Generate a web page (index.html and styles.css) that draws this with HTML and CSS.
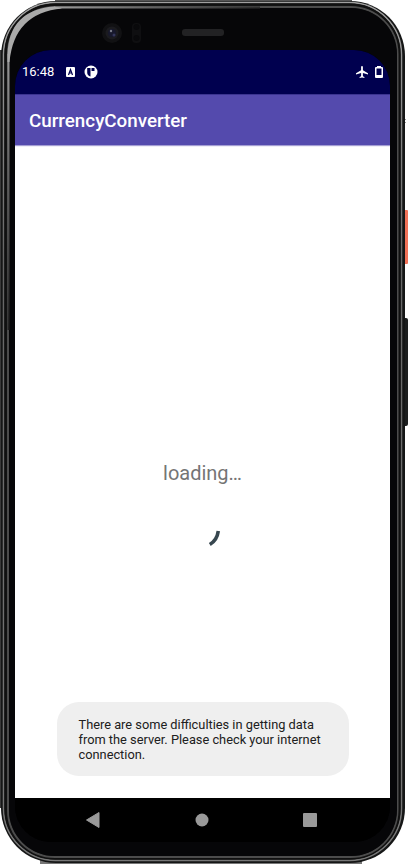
FILE: index.html
```
<!DOCTYPE html>
<html lang="en">
<head>
<meta charset="utf-8">
<title>CurrencyConverter</title>
<link rel="stylesheet" href="styles.css">
</head>
<body>
<div class="phone">
  <svg class="shell" width="411" height="866" viewBox="0 0 411 866" fill="none">
    <defs>
      <linearGradient id="edge" x1="0" y1="0" x2="0" y2="1">
        <stop offset="0" stop-color="#a0a0a0"/><stop offset=".12" stop-color="#8a8a8a"/>
        <stop offset=".3" stop-color="#666"/><stop offset="1" stop-color="#777"/>
      </linearGradient>
      <linearGradient id="top" gradientUnits="userSpaceOnUse" x1="30" y1="0" x2="260" y2="0">
        <stop offset="0" stop-color="#aaa"/><stop offset=".5" stop-color="#666"/><stop offset="1" stop-color="#2c2c2c"/>
      </linearGradient>
      <linearGradient id="side" gradientUnits="userSpaceOnUse" x1="0" y1="50" x2="0" y2="330">
        <stop offset="0" stop-color="#999"/><stop offset=".4" stop-color="#666"/><stop offset="1" stop-color="#222"/>
      </linearGradient>
    </defs>
    <rect x="403" y="210" width="5" height="54" rx="1" fill="#f27258"/>
    <rect x="402" y="318" width="6" height="108" rx="2" fill="#1c1e1e"/>
    <path d="M404 119.500h1.500M404 122.500h1.500" stroke="#333"/>
    <rect y="50" width="4" height="758" fill="#393939"/>
    <rect x="55" width="297" height="4" fill="#555"/>
    <rect x="40" y="860" width="322" height="4" fill="#777"/>
    <rect x="1" y="1" width="404" height="862" rx="55" fill="#151616"/>
    <rect x="3.500" y="2.500" width="398" height="858" rx="52" stroke="url(#edge)" stroke-width="1.500"/>
    <rect x="5.500" y="4.500" width="394" height="854" rx="50" stroke="#101010" stroke-width="2"/>
    <rect x="8" y="7" width="389.500" height="850" rx="47" stroke="#4c4c4c" stroke-width="2"/>
    <rect x="9" y="8" width="388" height="848" rx="46" fill="#060608"/>
    <path d="M8.500 330V54" stroke="url(#side)" stroke-width="2"/>
    <path d="M54 7.500H260" stroke="url(#top)" stroke-width="2"/>
    <path d="M7.500 62V54Q9 10 54 6.500L62 8.500Q14 13 9.500 62z" fill="#aaa"/>
    <circle cx="112" cy="33" r="10" fill="#111113"/>
    <circle cx="112" cy="33" r="6.500" fill="#1b1b1f"/>
    <circle cx="112" cy="33" r="4" fill="#17182c"/>
    <circle cx="111" cy="31" r="1.200" fill="#777a88"/>
    <circle cx="114" cy="35" r="1.500" fill="#34365a"/>
    <rect x="132" y="23" width="9" height="20" rx="4" fill="#0f0f11"/>
    <circle cx="136.500" cy="27" r="3" fill="#09090b"/><circle cx="136.500" cy="38" r="3" fill="#09090b"/>
    <rect x="182" y="29" width="42" height="7" rx="3" fill="#222224"/>
  </svg>
  <main class="screen">
    <header class="status">
      <time class="clock">16:48</time>
      <svg class="letter" width="10" height="10" viewBox="0 0 10 10"><rect width="9" height="10" rx="1" fill="#fff"/><path d="M2.500 8L4.500 2.500L6.500 8M3.200 6H5.800" fill="none" stroke="#00004f" stroke-width="1.200"/></svg>
      <svg class="badge" width="14" height="14" viewBox="0 0 14 14"><circle cx="7" cy="7" r="6.500" fill="#fff"/><path d="M3.200 3h3.300v8.500q-3.300-.8-3.300-4zM7.500 3h3v3h-3z" fill="#00004f"/></svg>
      <span class="space"></span>
      <svg class="plane" width="12" height="12" viewBox="2 2 20 20"><path fill="#fff" d="M22 16v-2l-8.500-5V3.500a1.500 1.500 0 0 0-3 0V9L2 14v2l8.500-2.500V19L8 20.500V22l4-1 4 1v-1.500L13.500 19v-5.500z"/></svg>
      <svg class="battery" width="8" height="12" viewBox="0 0 8 12"><path fill="#fff" fill-rule="evenodd" d="M2 0h4v1h1q1 0 1 1v9q0 1-1 1H1q-1 0-1-1V2q0-1 1-1h1zM1.500 2.500v6.500h5v-6.500z"/></svg>
    </header>
    <div class="appbar">CurrencyConverter</div>
    <section class="content">
      <p class="loading">loading…</p>
      <svg class="spinner" width="40" height="40" viewBox="0 0 40 40"><path d="M35.300 13Q34 22.300 26.800 26.500" fill="none" stroke="#37474f" stroke-width="3.600"/></svg>
      <div class="toast">There are some difficulties in getting data<br>from the server. Please check your internet<br>connection.</div>
    </section>
    <nav class="nav">
      <svg width="14" height="16" viewBox="0 0 14 16"><path d="M.5 8L13 .5v15z" fill="#999" stroke="#999" stroke-linejoin="round"/></svg>
      <svg width="14" height="14" viewBox="0 0 14 14"><circle cx="7" cy="7" r="6.500" fill="#999"/></svg>
      <svg width="14" height="14" viewBox="0 0 14 14"><rect width="14" height="14" rx="1" fill="#999"/></svg>
    </nav>
  </main>
</div>
</body>
</html>
```
FILE: styles.css
```
* { box-sizing: border-box; }
body { margin: 0; background: #fff; font-family: Roboto, sans-serif; }
.phone { position: relative; width: 411px; height: 866px; padding: 50px 21px 24px 15px; overflow: hidden; }
.shell { position: absolute; inset: 0; }
.screen { position: relative; display: flex; flex-direction: column; width: 375px; height: 792px; border-radius: 36px; overflow: hidden; background: #000; }
.status { display: flex; align-items: center; height: 44px; padding: 0 7px; background: #00004f; color: #fff; }
.clock { width: 44px; font-size: 13px; line-height: 16px; }
.letter { margin-right: 8px; }
.space { flex: 1; }
.plane { margin-right: 7px; }
.appbar { position: relative; height: 51px; padding-left: 14px; border-top: 1px solid #3b3490; background: #544aad; color: #fff; font-size: 18.8px; font-weight: 500; line-height: 52px; box-shadow: 0 1px 1px #544aad88; }
.content { display: flex; flex-direction: column; align-items: center; height: 653px; padding-top: 316px; background: #fff; }
.loading { margin: 0; color: #757575; font-size: 20px; line-height: 24px; }
.spinner { margin-top: 33px; }
.toast { width: 292px; height: 74px; margin: 144px 0 0; padding: 15px 22px; border-radius: 22px; background: #efefef; color: #202020; font-size: 12.8px; line-height: 15px; white-space: nowrap; }
.nav { display: flex; justify-content: space-between; align-items: center; height: 44px; padding: 0 73px 0 71px; background: #000; }
```
